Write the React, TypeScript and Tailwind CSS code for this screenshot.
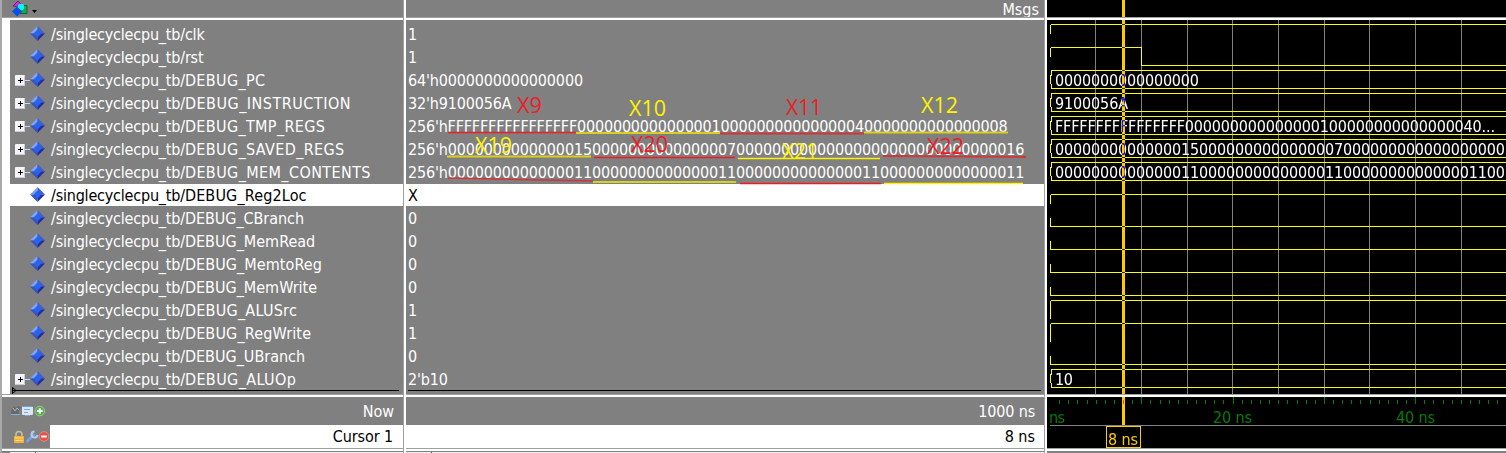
import React from 'react';

type Signal = { name: string; track: string; value: string; wave: 'bus' | 'high' | 'low' | 'fall' | 'x'; text?: string; len?: number; selected?: boolean };

const z = (n: number) => '0'.repeat(n);

const signals: Signal[] = [
  { name: 'clk', track: '', value: '1', wave: 'high' },
  { name: 'rst', track: '', value: '1', wave: 'fall' },
  { name: 'DEBUG_PC', track: 'tracking-[0.35px]', value: `64'h${z(16)}`, wave: 'bus', text: z(16), len: 144 },
  { name: 'DEBUG_INSTRUCTION', track: 'tracking-[0.5px]', value: "32'h9100056A", wave: 'bus', text: '9100056A', len: 73 },
  { name: 'DEBUG_TMP_REGS', track: 'tracking-[0.35px]', value: `256'h${'F'.repeat(16)}${z(15)}1${z(15)}4${z(15)}8`, wave: 'bus', text: `${'F'.repeat(16)}${z(15)}1${z(15)}40...`, len: 440 },
  { name: 'DEBUG_SAVED_REGS', track: 'tracking-[0.37px]', value: `256'h${z(14)}15${z(15)}7${z(16)}${z(14)}16`, wave: 'bus', text: `${z(14)}15${z(15)}7${z(18)}`, len: 450 },
  { name: 'DEBUG_MEM_CONTENTS', track: 'tracking-[0.4px]', value: `256'h${z(14)}11${z(14)}11${z(14)}11${z(14)}11`, wave: 'bus', text: `${z(14)}11${z(14)}11${z(14)}1100`, len: 450 },
  { name: 'DEBUG_Reg2Loc', track: 'tracking-[0.15px]', value: 'X', wave: 'x', selected: true },
  { name: 'DEBUG_CBranch', track: 'tracking-[-0.05px]', value: '0', wave: 'low' },
  { name: 'DEBUG_MemRead', track: 'tracking-[0px]', value: '0', wave: 'low' },
  { name: 'DEBUG_MemtoReg', track: 'tracking-[0.08px]', value: '0', wave: 'low' },
  { name: 'DEBUG_MemWrite', track: 'tracking-[0px]', value: '0', wave: 'low' },
  { name: 'DEBUG_ALUSrc', track: 'tracking-[0.25px]', value: '1', wave: 'high' },
  { name: 'DEBUG_RegWrite', track: 'tracking-[0.15px]', value: '1', wave: 'high' },
  { name: 'DEBUG_UBranch', track: 'tracking-[0px]', value: '0', wave: 'low' },
  { name: 'DEBUG_ALUOp', track: 'tracking-[0.4px]', value: "2'b10", wave: 'bus', text: '10', len: 18 },
];

function Diamond() {
  return (
    <svg width="16" height="16" viewBox="0 0 16 16" className="shrink-0">
      <path d="M7.5 0 0 7.5h7.5z" fill="#7fa4f4" />
      <path d="M7.5 0 15 7.5H7.5z" fill="#3f5fd0" />
      <path d="M0 7.5 7.5 15V7.5z" fill="#3a54bd" />
      <path d="M15 7.5 7.5 15V7.5z" fill="#272b9c" />
      <path d="M7.5 3.5l4 4-4 4-4-4z" fill="#2566f0" />
    </svg>
  );
}

function Expander() {
  return (
    <svg width="15" height="11" viewBox="0 0 15 11" className="shrink-0">
      <path d="M10 5.5h5" stroke="#d6d6d6" />
      <rect width="10" height="11" rx="1" fill="#f4f4fa" />
      <path d="M.5 10.5h9V1" fill="none" stroke="#c8ccdc" />
      <path d="M3 5.5h5M5.5 3v5" stroke="#000" />
    </svg>
  );
}

function HeaderIcon() {
  return (
    <svg width="28" height="17" viewBox="0 0 28 17" className="ml-[9px]">
      <path d="M2 6 7 1l3.500 3.500-5 2z" fill="#c62fe0" stroke="#50105c" strokeWidth=".7" />
      <path d="M9 5.500h7v8H9z" fill="#17a84a" stroke="#085824" strokeWidth=".8" />
      <circle cx="10" cy="7" r="3.300" fill="#0ff0fa" />
      <path d="m6 6.500 5 5-5 5-5-5z" fill="#0a4fe6" />
      <path d="M21 10h5l-2.500 3z" fill="#000" />
    </svg>
  );
}

function NowIcons() {
  return (
    <svg width="36" height="14" viewBox="0 0 36 14">
      <path d="M0 10V7l3-5 2 2 2-2 3 1-2 4v3z" fill="#68696b" />
      <path d="M2 4l2 3 2-3 2 2" stroke="#b4b4b4" fill="none" />
      <path d="M0 10.500h9" stroke="#75b5e8" />
      <rect x="11" y="2" width="11" height="9" rx="1" fill="#d9e7f6" />
      <path d="M11 2.500h11" stroke="#6b9fdc" />
      <path d="M13 5.500h6M13 8.500h4M14 11.500h5" stroke="#85a8d4" />
      <circle cx="28.800" cy="7" r="4.800" fill="#56ac4a" stroke="#b0deaa" strokeWidth=".7" />
      <path d="M26 7h5.600M28.800 4.200v5.600" stroke="#fff" strokeWidth="2" />
    </svg>
  );
}

function CursorIcons() {
  return (
    <svg width="37" height="14" viewBox="0 0 37 14">
      <path d="M3 7V4.500a3 3 0 0 1 6 0V6" stroke="#cdbf9c" strokeWidth="1.500" fill="none" />
      <rect x="1" y="6" width="10" height="7" rx="1" fill="#f3b33b" />
      <path d="M2 8h8M2 10.500h8" stroke="#fbd981" />
      <path d="m14.500 11 6-6" stroke="#72a4e8" strokeWidth="3" strokeLinecap="round" />
      <path d="M21.500 1.500a3 3 0 1 0 3 3.500" stroke="#aecdf1" strokeWidth="2" fill="none" />
      <circle cx="31" cy="6.500" r="4.800" fill="#e25448" stroke="#f09a90" strokeWidth=".7" />
      <path d="M28.200 6.500h5.600" stroke="#fff" strokeWidth="2" />
    </svg>
  );
}

function Annotations() {
  const red = '#ed1c24';
  const yellow = '#fff200';
  const labels: [string, number, number, string, number][] = [
    ['X9', 517, 113, red, 25],
    ['X10', 629, 116, yellow, 37],
    ['X11', 786, 115, red, 36],
    ['X12', 921, 113, yellow, 37],
    ['X19', 475, 153, yellow, 37],
    ['X20', 631, 152, red, 37],
    ['X21', 782, 159, yellow, 36],
    ['X22', 927, 154, red, 37],
  ];
  return (
    <svg width="641" height="376" viewBox="406 20 641 376" className="pointer-events-none absolute left-0 top-0">
      <g strokeWidth="1.300" fill="none">
        <path d="M448 132.500H576" stroke={red} />
        <path d="M576 133H720" stroke="#d9cf20" strokeWidth="1.800" />
        <path d="M720 133.500H864" stroke="#d2343a" strokeWidth="1.800" />
        <path d="M864 132.500H1008" stroke="#d9cf20" strokeWidth="1.800" />
        <path d="M447 156.500H591" stroke="#d9cf20" strokeWidth="1.800" />
        <path d="M594 157.500H735" stroke={red} />
        <path d="M738 158.500H880" stroke={yellow} />
        <path d="M883 156 1026 157" stroke="#d2343a" strokeWidth="1.800" />
        <path d="M448 178 593 181" stroke="#d2343a" strokeWidth="1.500" />
        <path d="M593 182H736" stroke="#d9cf20" strokeWidth="1.800" />
        <path d="M740 183.500H881" stroke={red} />
        <path d="M884 183.500H1023" stroke={yellow} />
      </g>
      {labels.map(([t, x, y, c, w]) => (
        <text key={t} x={x} y={y} fill={c} textLength={w} lengthAdjust="spacingAndGlyphs" className="text-[22px] [font-family:'Open_Sans',sans-serif] [font-stretch:normal]">{t}</text>
      ))}
    </svg>
  );
}

function Trace({ s, i }: { s: Signal; i: number }) {
  const y = 23 + 23 * i + 1.5;
  let d = '';
  if (s.wave === 'bus') d = `M1506 ${y}H1051.500V${y + 5}M1050.500 ${y + 4.5}v9M1051.500 ${y + 13}V${y + 18}H1506`;
  else if (s.wave === 'high') d = `M1051 ${y}H1506M1050.500 ${y + 0.5}v${i === 0 ? 9 : 18}`;
  else if (s.wave === 'fall') d = `M1051 ${y}H1141.500V${y + 18}H1506M1050.500 ${y + 0.5}v9`;
  else if (s.wave === 'low') d = `M1050.500 ${y + 9.5}V${y + 18}H1506`;
  else d = `M1051 ${y + 9}H1506M1050.500 ${y + 9.5}v9`;
  return (
    <g>
      <path d={d} fill="none" stroke="#ff0" shapeRendering="crispEdges" />
      {s.text && (
        <text x="1055" y={y + 15.5} fill="#fff" textLength={s.len}>{s.text}</text>
      )}
    </g>
  );
}

function Waves() {
  const grid = [1095, 1141, 1187, 1232, 1278, 1324, 1369, 1415, 1461];
  const ticks = Array.from({ length: 49 }, (_, k) => k + 1);
  return (
    <svg width="459" height="453" viewBox="1047 0 459 453" className="isolate block bg-black text-[16px]">
      <g shapeRendering="crispEdges">
        {grid.map((x) => <path key={x} d={`M${x + 0.5} 20V394`} stroke="#808080" />)}
        {ticks.map((k) => {
          const x = Math.round(1050 + k * 9.13) + 0.5;
          return <path key={k} d={`M${x} ${k % 10 === 0 ? 397 : 400}V404`} stroke="#008000" />;
        })}
        <path d="M1050 425.500H1506" stroke="#808080" />
      </g>
      {signals.map((s, i) => <Trace key={s.name} s={s} i={i} />)}
      <g fill="#008000">
        <text x="1049" y="423" textLength="16">ns</text>
        <text x="1213" y="423" textLength="39">20 ns</text>
        <text x="1396" y="423" textLength="39">40 ns</text>
      </g>
      <rect x="1122" width="3" height="425" fill="#fc0" className="mix-blend-difference" />
      <rect x="1106.500" y="426.500" width="34" height="21" fill="#000" stroke="#fc0" />
      <text x="1108" y="445" fill="#fc0" textLength="30">8 ns</text>
      <g shapeRendering="crispEdges">
        {[17, 394, 448].map((y) => (
          <g key={y}>
            <rect x="1047" y={y} width="459" height="1" fill="#a0a0a0" />
            <rect x="1047" y={y + 1} width="459" height="2" fill="#fff" />
          </g>
        ))}
        <rect x="1047" y="451" width="459" height="2" fill="#808080" />
      </g>
    </svg>
  );
}

const divider = 'h-[3px] shrink-0 border-t border-[#a0a0a0] bg-white';

export default function App() {
  return (
    <main className="flex h-[453px] w-[1506px] overflow-hidden bg-[#808080] font-['DejaVu_Sans_Condensed','DejaVu_Sans',sans-serif] text-[16px] leading-[23px] text-white [font-stretch:condensed]">
      <section className="flex w-[406px] shrink-0 flex-col border-r-2 border-white">
        <div className="flex h-full flex-col border-l-2 border-r border-l-[#a9a9a9] border-r-[#a0a0a0]">
          <header className="h-[17px]"><HeaderIcon /></header>
          <div className={divider} />
          <div className="h-[374px] shrink-0 border-l-8 border-white pt-[3px]">
            {signals.map((s) => (
              <div key={s.name} className="h-[23px]">
                <div className={`flex h-[22px] items-center ${s.selected ? 'bg-white text-black' : ''}`}>
                  <div className="flex w-5 justify-end pt-px">{s.wave === 'bus' && <Expander />}</div>
                  <Diamond />
                  <span className="ml-[5px] whitespace-nowrap tracking-[-0.2px]">/singlecyclecpu_tb/<span className={s.track}>{s.name}</span></span>
                </div>
              </div>
            ))}
            <svg width="390" height="7" className="-mt-1 block"><path d="M2.500 .5v6l3.500-3zM3 3.500h386" stroke="#000" fill="none" /></svg>
          </div>
          <div className={divider} />
          <div className="flex h-7 shrink-0 items-center justify-between px-[9px]"><NowIcons /><span>Now</span></div>
          <div className="flex h-[23px] shrink-0 items-center">
            <div className="w-12 pl-[11px]"><CursorIcons /></div>
            <div className="h-full flex-1 bg-white pr-[10px] text-right leading-6 tracking-[-0.1px] text-black">Cursor 1</div>
          </div>
          <div className={divider} />
          <div className="flex h-[2px] border-t border-[#808080] bg-[#f0f0f0]"><div className="w-2 bg-[#808080]" /><div className="w-[26px] border-r border-[#606060]" /></div>
        </div>
      </section>
      <section className="flex w-[641px] shrink-0 flex-col border-r-2 border-white">
        <div className="flex h-full flex-col border-r border-[#a0a0a0]">
          <header className="h-[17px] pr-[5px] text-right leading-[19px]">Msgs</header>
          <div className={divider} />
          <div className="relative h-[374px] shrink-0 pt-[3px]">
            {signals.map((s) => (
              <div key={s.name} className="h-[23px]">
                <div className={`h-[22px] whitespace-nowrap pl-[2px] ${s.value.includes('FF') ? 'tracking-[-0.19px]' : 'tracking-[-0.15px]'} ${s.selected ? 'bg-white text-black' : ''}`}>{s.value}</div>
              </div>
            ))}
            <div className="-mt-px mr-[3px] ml-[2px] h-px bg-black" />
            <Annotations />
          </div>
          <div className={divider} />
          <div className="h-7 shrink-0 pr-[9px] text-right leading-[29px] tracking-[-0.15px]">1000 ns</div>
          <div className="h-[23px] shrink-0 bg-white pr-[9px] text-right leading-6 text-black">8 ns</div>
          <div className={divider} />
          <div className="flex h-[2px] border-t border-[#808080] bg-[#f0f0f0]"><div className="w-[26px] border-r border-[#606060]" /></div>
        </div>
      </section>
      <Waves />
    </main>
  );
}
